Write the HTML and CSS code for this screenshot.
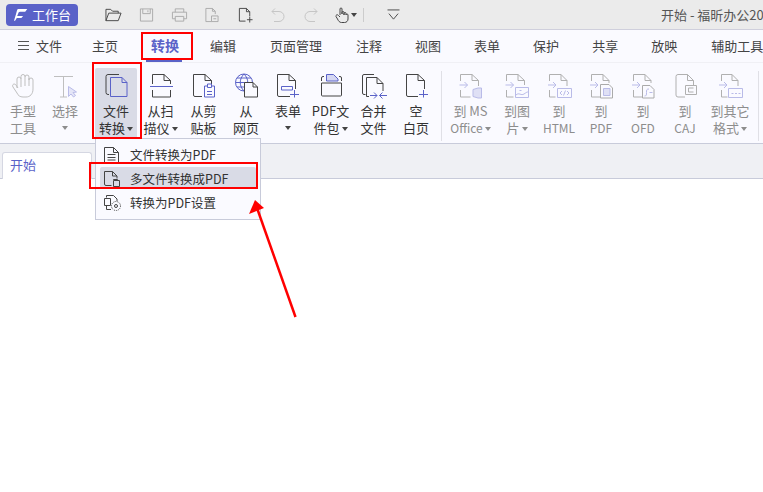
FILE: index.html
```html
<!DOCTYPE html>
<html lang="zh">
<head>
<meta charset="utf-8">
<title>开始 - 福昕办公</title>
<link rel="stylesheet" href="styles.css">
</head>
<body>
<div class="app">
  <header class="titlebar">
    <div class="brand">
      <svg class="brand-logo" viewBox="0 0 20 18"><path d="M6 1h13l-3 4H8.500C7 5 6.500 6 6 7.500L4.500 11H13l-2.500 3H4l-2.500 4H0L3 8C4 4 4.500 1 6 1z"/></svg>
      <span>工作台</span>
    </div>
    <div class="quick">
      <svg class="qi q-folder" viewBox="0 0 18 16"><path d="M1 14V2h5l2 2h6v2M1 14l3-8h13l-3 8z" class="ln-dark"/></svg>
      <svg class="qi q-save" viewBox="0 0 16 16"><path d="M1.500 1.500h13v13h-13zM4 1.500v5h8v-5M9.500 3v2" class="ln-grey"/></svg>
      <svg class="qi q-print" viewBox="0 0 18 16"><path d="M4.500 5V1.500h9V5M4.500 12H1.500V5h15v7h-3M4.500 9.500h9v5h-9z" class="ln-grey"/></svg>
      <svg class="qi q-doc" viewBox="0 0 16 17"><path d="M8 15.500H2V1.500h7l3 3v3M9 1.500v3h3M8 9.500h7v6H8zM10 12.500h3" class="ln-grey"/></svg>
      <svg class="qi q-new" viewBox="0 0 16 17"><path d="M8 15H1.500V1.500H9l3.500 3.500v5M9 1.500V5h3.500M9.500 13.500h6M12.500 10.500v6" class="ln-dark"/></svg>
      <svg class="qi q-undo" viewBox="0 0 14 15"><path d="M4 1L1 4l3 3M1 4h7a5 5 0 0 1 0 10H3" class="ln-light"/></svg>
      <svg class="qi q-redo" viewBox="0 0 14 15"><path d="M10 1l3 3-3 3M13 4H6a5 5 0 0 0 0 10h5" class="ln-light"/></svg>
      <svg class="qi q-hand" viewBox="0 0 14 16"><path d="M5 8V2a1 1 0 0 1 2 0v5V5.500a1 1 0 0 1 2 0V8V6.500a1 1 0 0 1 2 0V8a1 1 0 0 1 2 0v4c0 2-1.500 3.500-3.500 3.500H6.500C4.500 15.500 3.500 14 2.500 12L1 9.500C.500 8 2.500 7 3.500 8.500L5 10" class="ln-dark"/></svg>
      <span class="caret caret-dark"></span>
      <span class="qsep"></span>
      <svg class="qi q-more" viewBox="0 0 14 13"><path d="M.500 1h13M2 5l5 6 5-6" class="ln-dark"/></svg>
    </div>
    <div class="doc-title">开始 - 福昕办公2023</div>
  </header>

  <nav class="menubar">
    <div class="menu-file"><span class="burger"></span><span>文件</span></div>
    <span class="menu-sep"></span>
    <span class="menu-item">主页</span>
    <span class="menu-item mi-active">转换</span>
    <span class="menu-item mi-wide">编辑</span>
    <span class="menu-item mi-wide">页面管理</span>
    <span class="menu-item">注释</span>
    <span class="menu-item">视图</span>
    <span class="menu-item">表单</span>
    <span class="menu-item">保护</span>
    <span class="menu-item">共享</span>
    <span class="menu-item mi-wide">放映</span>
    <span class="menu-item">辅助工具</span>
  </nav>

  <section class="ribbon">
    <div class="tool tool-off w42">
      <svg class="ic" viewBox="0 0 26 28"><path d="M7 17V8a2 2 0 0 1 4 0V5.500a2 2 0 0 1 4 0V6a2 2 0 0 1 4 0v3a2 2 0 0 1 4 0v9c0 5-3 8-7 8h-3c-3 0-5-1.500-6-4l-4-6c-1.500-2.500 1.500-4 3-2l2 3M11 8v8M15 6v9M19 7v8" class="ln-hand"/></svg>
      <span>手型<br>工具</span>
    </div>
    <div class="tool tool-off w42">
      <svg class="ic" viewBox="0 0 26 28"><path d="M2 5.500h19M11.500 5.500v20.500M8 26h7" class="ln-hand"/><path d="M16.500 15.500v10l2.500-2.500 2.500 3 2-1.500-2.500-3 3.500-.500z" class="ln-purple-lt"/></svg>
      <span>选择</span>
      <span class="caret caret-grey solo"></span>
    </div>
    <div class="tool tool-hot">
      <svg class="ic" viewBox="0 0 26 28"><path d="M6 23.500H5a2 2 0 0 1-2-2V5.500a2 2 0 0 1 2-2h11" class="ln-dark"/><path d="M19 6.500H7.500v19H24V11.500zM19 6.500v5h5" class="ln-blue"/></svg>
      <span>文件<br>转换<i class="caret caret-dark"></i></span>
    </div>
    <div class="tool w43">
      <svg class="ic" viewBox="0 0 26 28"><path d="M4.500 13V3.500H16l6.500 6V13M16 3.500v6h6.500M4.500 19v7h18v-7" class="ln-dark"/><path d="M2 15.500h23" class="ln-blue"/></svg>
      <span>从扫<br>描仪<i class="caret caret-dark"></i></span>
    </div>
    <div class="tool w43">
      <svg class="ic" viewBox="0 0 26 28"><path d="M11 25.500H4A1.500 1.500 0 0 1 2.500 24V3.500H14l6.500 6V13M14 3.500v6h6.500" class="ln-dark"/><path d="M16 15h-2.500v11h10V15H21M16.500 13h4v3.500h-4zM16 20.500h5M16 23.500h5" class="ln-blue"/></svg>
      <span>从剪<br>贴板</span>
    </div>
    <div class="tool w42">
      <svg class="ic" viewBox="0 0 26 28"><circle cx="11" cy="11.500" r="8.500" class="ln-blue"/><path d="M2.500 11.500h17M4 7h14M4 16h14M11 3c-5 5-5 12 0 17M11 3c5 5 5 12 0 17" class="ln-blue"/><path d="M11.500 26V11.500H20l4.500 4.500v10zM20 11.500V16h4.500" class="ln-dark-fill"/></svg>
      <span>从<br>网页</span>
    </div>
    <div class="tool w42">
      <svg class="ic" viewBox="0 0 26 28"><path d="M15 25.500H4A1.500 1.500 0 0 1 2.500 24V3.500H14l6.500 6V18M14 3.500v6h6.500" class="ln-dark"/><path d="M6.500 15.500h11v3.500h-11zM15 23.500h9M19.500 19v7.500" class="ln-blue"/></svg>
      <span>表单</span>
      <span class="caret caret-dark solo"></span>
    </div>
    <div class="tool w43">
      <svg class="ic" viewBox="0 0 26 28"><path d="M3.500 12h20v12a1 1 0 0 1-1 1h-18a1 1 0 0 1-1-1zM3.500 10V7a1.500 1.500 0 0 1 1.500-1.500h1M23.500 10V7A1.500 1.500 0 0 0 22 5.500h-1" class="ln-dark"/><path d="M8.500 10V3.500h7l4.500 4.500v2z" class="ln-fold"/></svg>
      <span>PDF文<br>件包<i class="caret caret-dark"></i></span>
    </div>
    <div class="tool w43">
      <svg class="ic" viewBox="0 0 26 28"><path d="M4.500 23.500H3A1.500 1.500 0 0 1 1.500 22V5A1.500 1.500 0 0 1 3 3.500h10" class="ln-dark"/><path d="M8 25.500H5.500v-19H16l6 6V20M16 6.500v6h6" class="ln-dark"/><path d="M9 24.500h7M13 21.500l3 3-3 3M26 24.500h-7.500M21.500 21.500l-3 3 3 3" class="ln-blue"/></svg>
      <span>合并<br>文件</span>
    </div>
    <div class="tool w42">
      <svg class="ic" viewBox="0 0 26 28"><path d="M15 25.500H5A1.500 1.500 0 0 1 3.500 24V3.500H15l6.500 6V18M15 3.500v6h6.500" class="ln-dark"/><path d="M16 23.500h9M20.500 19v7.500" class="ln-blue"/></svg>
      <span>空<br>白页</span>
    </div>
    <span class="rb-sep"></span>
    <div class="tool tool-off w47">
      <svg class="ic" viewBox="0 0 26 28"><path d="M2.500 10V3.500H14l6.500 6V15M14 3.500v6h6.500M2.500 19v7h10" class="ln-grey-lt"/><path d="M1.500 14h8M6.500 11l3 3-3 3" class="ln-lav"/><path d="M15 18.500l5-1.500h3.500v10H20l-5-1.500z" class="ln-lav-fill"/></svg>
      <span>到 MS<br><small>Office</small><i class="caret caret-grey"></i></span>
    </div>
    <div class="tool tool-off w42 nudge2">
      <svg class="ic" viewBox="0 0 26 28"><path d="M2.500 10V3.500H14l6.500 6V14M14 3.500v6h6.500M2.500 19v7h7" class="ln-grey-lt"/><path d="M1.500 14h8M6.500 11l3 3-3 3M11.500 16.500h13v10h-13zM12 24c3-3 5 1 8-1s3-2 4-2M15.500 19.500h2" class="ln-lav"/></svg>
      <span>到图<br>片<i class="caret caret-grey"></i></span>
    </div>
    <div class="tool tool-off w42">
      <svg class="ic" viewBox="0 0 26 28"><path d="M3.500 10V3.500H15l6 6V15M15 3.500v6h6M3.500 19v7h6" class="ln-grey-lt"/><path d="M2 14h8M7 11l3 3-3 3M11.500 17.500h14v9h-14zM16 20l-2 2 2 2M21 20l2 2-2 2M19.500 19.500l-2 5" class="ln-lav"/></svg>
      <span>到<br><small>HTML</small></span>
    </div>
    <div class="tool tool-off w42">
      <svg class="ic" viewBox="0 0 26 28"><path d="M3.500 10V3.500H15l6 6V12M15 3.500v6h6M3.500 19v7h9" class="ln-grey-lt"/><path d="M12.500 13.500H21l3.500 3.500v10h-12z" class="ln-grey-fill"/><path d="M2 14h8M7 11l3 3-3 3" class="ln-lav"/><path d="M15.500 17.500h6.500v7h-6.500z" class="ln-lav-fill"/></svg>
      <span>到<br><small>PDF</small></span>
    </div>
    <div class="tool tool-off w42">
      <svg class="ic" viewBox="0 0 26 28"><path d="M3.500 10V3.500H15l6 6V12M15 3.500v6h6M3.500 19v7h9" class="ln-grey-lt"/><path d="M12.500 14.500H20l4 4v8.500H12.500z" class="ln-grey-fill"/><path d="M2 14h8M7 11l3 3-3 3M14.500 25c2 0 2-1 2-3.500s0-3.500 2.500-3.500M19.500 21.500h3" class="ln-lav"/></svg>
      <span>到<br><small>OFD</small></span>
    </div>
    <div class="tool tool-off w42">
      <svg class="ic" viewBox="0 0 26 28"><path d="M13 26H6a2 2 0 0 1-2-2V5.500a2 2 0 0 1 2-2h9.500l6 6V14M15.500 3.500v6h6" class="ln-grey-lt"/><path d="M13.500 14.500h11v9h-11zM21.500 17H16.500v4h5" class="ln-grey-lt"/></svg>
      <span>到<br><small>CAJ</small></span>
    </div>
    <div class="tool tool-off w46 nudge1">
      <svg class="ic" viewBox="0 0 26 28"><path d="M4.500 10V3.500H15l6 6V15M15 3.500v6h6M4.500 19v7h6" class="ln-grey-lt"/><path d="M2 14h8M7 11l3 3-3 3M11.500 17.500h14v9h-14zM14.500 22.500h2M18 22.500h2M21.500 22.500h2" class="ln-lav"/></svg>
      <span>到其它<br>格式<i class="caret caret-grey"></i></span>
    </div>
    <span class="rb-sep rb-sep-end"></span>
  </section>

  <div class="tabbar"><div class="tab">开始</div></div>
  <main class="canvas"></main>

  <div class="dropdown">
    <div class="dd-row">
      <svg class="dd-ic" viewBox="0 0 16 18"><path d="M.500 2.500h9l5 5v10H.500zM9.500 2.500v5h5M3.500 9.500h8M3.500 12.500h8M3.500 15h8" class="ln-dark"/></svg>
      <span>文件转换为PDF</span>
    </div>
    <div class="dd-row dd-hot">
      <svg class="dd-ic" viewBox="0 0 16 18"><path d="M7.500 16.500H2A1.500 1.500 0 0 1 .500 15V2.500H8.500l4.500 4.500v2.500M8.500 2.500V7H13" class="ln-dark"/><path d="M9.500 11v-.500h4V11M9.500 11.500h6v6h-6z" class="ln-dark"/></svg>
      <span>多文件转换成PDF</span>
    </div>
    <div class="dd-row">
      <svg class="dd-ic" viewBox="0 0 16 18"><path d="M2.500 4.500v-2h7l3.500 3.500v2M2.500 13v3.500H7M.500 5.500h6v7h-6z" class="ln-dark"/><circle cx="12" cy="13" r="4.500" class="ln-dots"/><circle cx="12" cy="13" r="1.500" class="ln-dark"/></svg>
      <span>转换为PDF设置</span>
    </div>
  </div>

  <span class="mark mark-tab"></span>
  <span class="mark mark-tool"></span>
  <span class="mark mark-row"></span>
  <svg class="arrow" viewBox="0 0 763 492"><path d="M295.500 317L257 208" class="arrow-line"/><path d="M255 200L249 214L264 208z" class="arrow-head"/></svg>
</div>
</body>
</html>
```
FILE: styles.css
```css
* { box-sizing: border-box; }
html, body { margin: 0; height: 100%; }
body { overflow: hidden; background: #fff; }
.app {
  position: relative;
  width: 763px;
  height: 492px;
  display: flex;
  flex-direction: column;
  overflow: hidden;
  font: 13px/17px "Noto Sans CJK SC", "Noto Sans", sans-serif;
  color: #333;
}

/* title bar */
.titlebar {
  flex: 0 0 30px;
  display: flex;
  align-items: center;
  padding-left: 6px;
  background: #ebebeb;
  border-bottom: 1px solid #cfcfdc;
}
.brand {
  width: 72px;
  height: 22px;
  display: flex;
  align-items: center;
  gap: 4px;
  padding-left: 8px;
  border-radius: 4px;
  background: #5a62c8;
  color: #fff;
}
.brand-logo { width: 14px; height: 13px; }
.quick { display: flex; align-items: center; margin-left: 27px; }
.qi { display: block; height: 16px; }
.q-folder { width: 17px; margin-right: 17px; }
.q-save { width: 15px; margin-right: 17px; }
.q-print { width: 17px; margin-right: 16px; }
.q-doc { width: 15px; margin-right: 18px; }
.q-new { width: 17px; margin-right: 17px; }
.q-undo { width: 14px; margin-right: 19px; }
.q-redo { width: 14px; margin-right: 17px; }
.q-hand { width: 14px; }
.q-more { width: 13px; height: 12px; }
.qsep { width: 1px; height: 14px; margin: 0 23px 0 6px; background: #ccc; }
.doc-title {
  flex: 0 0 102px;
  margin-left: auto;
  overflow: hidden;
  white-space: nowrap;
  color: #555;
}

/* menu bar */
.menubar {
  flex: 0 0 33px;
  display: flex;
  align-items: center;
  padding: 0 0 2px 18px;
  background: #fafaff;
  border-bottom: 1px solid #f0f0f5;
  white-space: nowrap;
}
.menu-file { display: flex; align-items: center; gap: 7px; color: #444; }
.burger {
  width: 11px;
  height: 9px;
  border-top: 1px solid #555;
  border-bottom: 1px solid #555;
  background: linear-gradient(#555, #555) center / 100% 1px no-repeat;
}
.menu-sep { width: 1px; height: 12px; margin: 0 15px; background: #ccc; }
.menu-item { position: relative; flex: none; color: #444; margin-right: 33px; }
.mi-wide { margin-right: 34px; }
.mi-active { font-size: 14px; font-weight: 700; color: #5a62c8; margin-right: 31px; }
.mi-active::after {
  content: "";
  position: absolute;
  left: -5px;
  right: -3px;
  bottom: -8px;
  height: 2px;
  background: #5a62c8;
}

/* ribbon */
.ribbon {
  flex: 0 0 81px;
  display: flex;
  align-items: flex-start;
  padding: 4px 0 0 2px;
  background: #fafaff;
  border-bottom: 1px solid #c8cbda;
}
.tool {
  flex: 0 0 auto;
  height: 72px;
  display: flex;
  flex-direction: column;
  align-items: center;
  text-align: center;
  padding-top: 4px;
  color: #333;
  white-space: nowrap;
}
.tool span { display: block; margin-top: 3px; }
.tool .solo { margin-top: 7px; }
.tool small { font-size: 12px; }
.tool-off, .tool-off span { color: #8d8d8d; }
.w42 { width: 42px; }
.w43 { width: 43px; }
.w46 { width: 46px; }
.w47 { width: 47px; }
.nudge1 { margin-left: 1px; }
.nudge2 { margin-left: 2px; }
.tool-hot {
  width: 42px;
  height: 71px;
  margin: 1px 2px 0 9px;
  padding-top: 3px;
  border-radius: 2px;
  background: #d9dbe6;
}
.ic { display: block; width: 26px; height: 28px; overflow: visible; }
.rb-sep { flex: 0 0 1px; height: 70px; margin: 4px 5px 0 4px; background: #e0e0e6; }
.rb-sep-end { margin-left: 5px; }
.caret {
  display: inline-block;
  width: 0;
  height: 0;
  vertical-align: 2px;
  margin-left: 2px;
  border-left: 3.500px solid transparent;
  border-right: 3.500px solid transparent;
  border-top: 4px solid #444;
}
.caret-dark { border-top-color: #444; }
.caret-grey { border-top-color: #8d8d8d; }
.tool .caret.solo { display: block; margin-left: 0; }

/* tab bar */
.tabbar {
  flex: 0 0 35px;
  display: flex;
  align-items: flex-end;
  padding-left: 2px;
  background: #eff0f4;
  border-bottom: 1px solid #c8cbda;
}
.tab {
  width: 90px;
  height: 27px;
  margin-bottom: -1px;
  padding: 3px 0 0 7px;
  background: #fff;
  border: 1px solid #d5d7e2;
  border-bottom: 0;
  border-radius: 3px 3px 0 0;
  color: #5a62c8;
}
.canvas { flex: 1; background: #fff; }

/* dropdown */
.dropdown {
  position: absolute;
  left: 95px;
  top: 138px;
  width: 166px;
  height: 82px;
  padding: 3px 4px;
  background: #fafaff;
  border: 1px solid #c8cbda;
}
.dd-row {
  height: 24px;
  display: flex;
  align-items: center;
  gap: 10px;
  padding-left: 4px;
  border-radius: 2px;
  color: #333;
  white-space: nowrap;
  font-size: 12.500px;
}
.dd-hot { height: 22px; margin: 1px 0; background: #d9dbe6; }
.dd-ic { flex: 0 0 16px; width: 16px; height: 18px; overflow: visible; }

/* annotations */
.mark { position: absolute; border: 2px solid #f00; pointer-events: none; }
.mark-tab { left: 141px; top: 32px; width: 52px; height: 28px; }
.mark-tool { left: 92px; top: 62px; width: 50px; height: 77px; }
.mark-row { left: 89px; top: 162px; width: 169px; height: 27px; }
.arrow { position: absolute; left: 0; top: 0; width: 763px; height: 492px; pointer-events: none; }

/* icon strokes */
svg path, svg circle { fill: none; stroke-width: 1; }
.ln-dark { stroke: #444; }
.ln-dark-fill { stroke: #444; fill: #fafaff; }
.ln-grey { stroke: #aaa; }
.ln-grey-fill { stroke: #aaa; fill: #fafaff; }
.ln-light { stroke: #c6c6c6; }
.ln-hand { stroke: #bfbfbf; }
.ln-grey-lt { stroke: #b0b0b0; }
.ln-blue { stroke: #5a62c8; }
.ln-fold { stroke: #5a62c8; fill: #d5d7f2; }
.ln-purple-lt { stroke: #b9bbe8; fill: #e4e5f7; }
.ln-lav { stroke: #b9bbe8; }
.ln-lav-fill { stroke: #b9bbe8; fill: #dfe0f5; }
.ln-dots { stroke: #444; stroke-dasharray: 1 1; }
.brand-logo path { stroke: none; fill: #fff; }
.arrow-line { fill: none; stroke: #f00; stroke-width: 2.5; }
.arrow-head { fill: #f00; stroke: none; }
```
